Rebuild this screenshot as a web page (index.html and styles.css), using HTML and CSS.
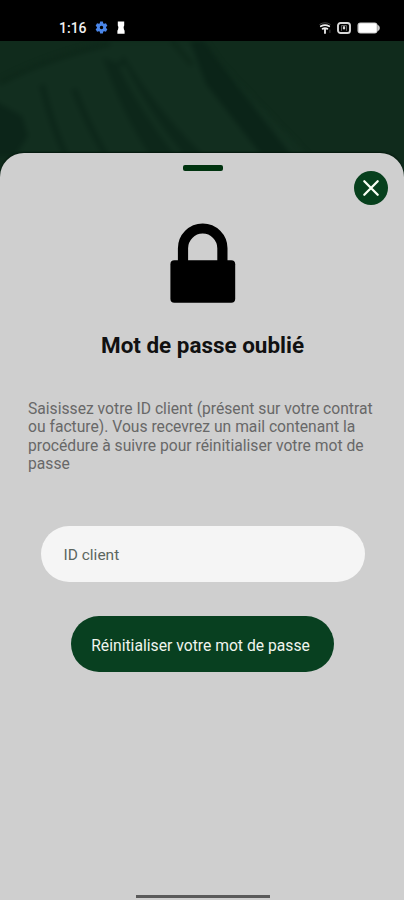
FILE: index.html
```html
<!DOCTYPE html>
<html lang="fr">
<head>
<meta charset="utf-8">
<title>Mot de passe oublié</title>
<link rel="stylesheet" href="styles.css">
</head>
<body>
<div class="screen">
  <header class="status">
    <span class="time">1:16</span>
    <svg class="gear" width="13" height="13" viewBox="0 0 24 24" fill="#4a86ea"><path fill-rule="evenodd" d="M9.5 1h5l.8 3.400 1.600.9 3.300-1 2.600 4.400L20.400 11v2l2.400 2.300-2.600 4.400-3.300-1-1.600.9-.8 3.400h-5l-.8-3.400-1.600-.9-3.300 1-2.600-4.400L3.600 13v-2L1.200 8.700l2.600-4.400 3.300 1 1.600-.9zM12 8.800a3.200 3.200 0 1 0 0 6.400 3.200 3.200 0 0 0 0-6.400z"/></svg>
    <svg class="rook" width="8" height="13" viewBox="0 0 8 13" fill="#fff"><path d="M.8.500h6.400v4L6.600 6l.3 2.300.7 1.500v2.900H.4V9.800l.7-1.500L1.400 6 .8 4.500z"/></svg>
    <div class="system">
      <svg width="12" height="12" viewBox="0 0 12 12" fill="none" stroke-linecap="round"><path d="M.8 2.300Q6-1 11.200 2.300" stroke="#444" stroke-width="1"/><path d="M1.800 4.300Q6 1.800 10.200 4.300" stroke="#eee" stroke-width="1.800"/><path d="M3.600 6.900Q6 5.500 8.400 6.900M6 7v4" stroke="#eee" stroke-width="1.800"/><path d="M10.900 8v2.500" stroke="#444" stroke-width="1"/></svg>
      <svg width="14" height="12" viewBox="0 0 14 12" fill="none" stroke="#d8d8d8"><rect x="1" y="1" width="12" height="10" rx="2.600" stroke-width="1.900"/><path d="M4.500 8.800V3.500h5v5.300" stroke-width=".8" stroke="#777"/><path d="M7 4.300v3" stroke-width="2.200"/></svg>
      <svg width="23" height="12" viewBox="0 0 23 12"><rect x=".5" y=".5" width="20" height="11" rx="3" fill="#ccc"/><rect x="2" y="1.500" width="17.500" height="9" rx="1.500" fill="#fff"/><path d="M20.300 2.500q2.600 1 2.600 3.500t-2.600 3.500z" fill="#ccc"/></svg>
    </div>
  </header>
  <div class="hero">
    <svg class="photo" width="404" height="160" viewBox="0 0 404 160">
      <defs><filter id="soft" x="-20%" y="-20%" width="140%" height="140%" color-interpolation-filters="sRGB"><feGaussianBlur stdDeviation="2.500"/></filter></defs>
      <rect width="404" height="160" fill="#102b1c"/>
      <g filter="url(#soft)">
        <path d="M-5 43L108 0h90l110 115H-5z" fill="#122e1f"/>
        <path d="M0 42Q50 16 110 3" stroke="#0e281a" stroke-width="5" fill="none"/>
        <path d="M103 17Q122 72 150 115h54Q154 65 124 15L118 22z" fill="#0d271a"/>
        <path d="M122 25Q144 70 180 115" stroke="#122e1f" stroke-width="7" fill="none"/>
        <path d="M190 0L206 43 262 115h30L218 20 204 0z" fill="#0b2418"/>
        <path d="M42 44Q52 85 66 115M74 48Q86 80 106 115" stroke="#0d271a" stroke-width="6" fill="none"/>
        <path d="M-5 60L22 75 28 95 15 115H-5z" fill="#0c2519"/>
        <path d="M172 0L192 24" stroke="#0e281a" stroke-width="5"/>
      </g>
    </svg>
  </div>
  <main class="sheet">
    <div class="handle"></div>
    <button class="close" aria-label="Fermer"><svg width="34" height="34" viewBox="0 0 34 34"><path d="M10.300 10.300l13.400 13.400M23.700 10.300L10.300 23.700" stroke="#fafff5" stroke-width="2.300" stroke-linecap="round"/></svg></button>
    <svg class="lock" width="66" height="80" viewBox="0 0 66 80"><path d="M13 40V25.200a19.700 19.700 0 0 1 39.400 0V40" fill="none" stroke="#000" stroke-width="10.200"/><rect x=".4" y="37.200" width="64.800" height="42.600" rx="4" fill="#000"/></svg>
    <h1>Mot de passe oublié</h1>
    <p>Saisissez votre ID client (présent sur votre contrat<br>ou facture). Vous recevrez un mail contenant la<br>procédure à suivre pour réinitialiser votre mot de<br>passe</p>
    <div class="field">ID client</div>
    <button class="submit">Réinitialiser votre mot de passe</button>
    <div class="home"></div>
  </main>
</div>
</body>
</html>
```
FILE: styles.css
```css
* { box-sizing: border-box; }
body { margin: 0; background: #000; font-family: Roboto, sans-serif; }
button { border: 0; padding: 0; font-family: inherit; }
svg { display: block; flex: none; }
.screen { width: 404px; height: 900px; overflow: hidden; display: flex; flex-direction: column; }
.status { height: 41px; flex: none; background: #000; display: flex; align-items: center; padding: 14px 24px 0 59px; color: #f1f1f1; }
.time { width: 36px; font: 500 14px/14px Roboto, sans-serif; white-space: nowrap; }
.rook { margin-left: 9px; }
.system { display: flex; align-items: center; gap: 6px; margin-left: auto; }
.hero { height: 112px; flex: none; background: #102b1d; }
.sheet { position: relative; flex: 1; display: flex; flex-direction: column; align-items: center; background: #cfcfcf; border-radius: 24px 24px 0 0; box-shadow: 0 -1px 2px #03170c; }
.handle { width: 40px; height: 6px; margin: 12px 0 0 1px; border-radius: 2px; background: #00330f; }
.close { position: absolute; top: 18px; right: 16px; width: 34px; height: 34px; border-radius: 50%; background: #07401d; }
.lock { margin: 52px 0 0 1px; }
h1 { margin: 29px 0 0 1px; font-size: 22.450px; line-height: 26px; font-weight: 700; color: #111; white-space: nowrap; }
p { width: 348px; margin: 42px 0 0; font-size: 15.660px; line-height: 18.400px; color: #686868; white-space: nowrap; }
.field { width: 324px; height: 56px; margin: 52px 0 0 1px; padding-left: 23px; border-radius: 28px; background: #f5f5f5; color: #5c6660; font-size: 15.500px; line-height: 58px; }
.submit { width: 263px; height: 56px; margin-top: 34px; border-radius: 28px; background: #084020; color: #f0f5ee; font-size: 15.700px; line-height: 58px; white-space: nowrap; padding: 1px 3px 0 0; }
.home { width: 134px; height: 3px; margin: auto 0 2px 1px; background: #5a5a5a; }
```
